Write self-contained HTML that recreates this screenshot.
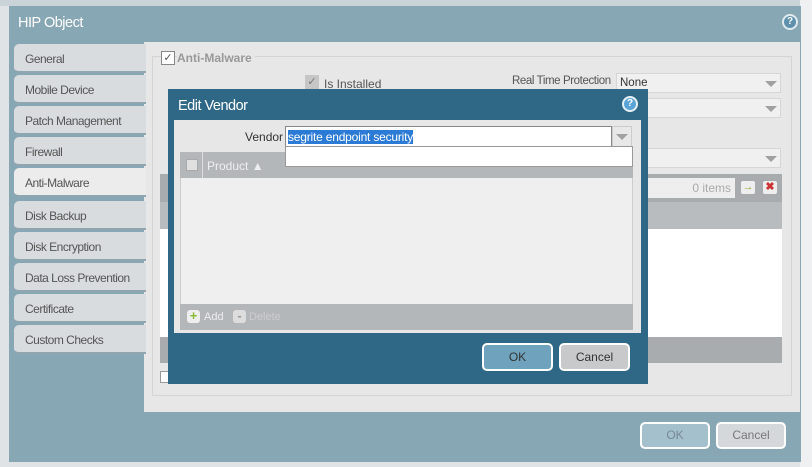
<!DOCTYPE html>
<html><head><style>
*{box-sizing:border-box;margin:0;padding:0}
body{width:812px;height:467px;position:relative;background:#dfe3e5;font-family:"Liberation Sans",sans-serif;overflow:hidden;font-size:12px;color:#333}
.a{position:absolute}
.tab{position:absolute;left:14px;width:132px;height:29px;background:#d8dcde;border-radius:5px 0 0 5px;border-bottom:2px solid #8fa6b1;padding:8px 0 0 11px;font-size:12px;color:#555;letter-spacing:-0.5px}
.dd{position:absolute;background:#f0f0f0;border:1px solid #d6d6d6}
.arr{position:absolute;width:0;height:0;border-left:6px solid transparent;border-right:6px solid transparent;border-top:6px solid #a0a0a0}
.btn{position:absolute;border:2px solid #fff;border-radius:5px;text-align:center;font-size:12px;color:#333}
</style></head><body>
<div class="a" style="left:0;top:0;width:812px;height:6px;background:#c9d3d8"></div>
<div class="a" style="left:800px;top:0;width:12px;height:467px;background:#eef0f1"></div>
<div class="a" style="left:9px;top:6px;width:792px;height:456px;background:#88a7b4"></div>
<div class="a" style="left:18px;top:15px;font-size:14.5px;color:#fff;letter-spacing:-0.5px">HIP Object</div>
<div class="a" style="left:782px;top:14px;width:16px;height:16px;border-radius:50%;background:#5f91ad;border:2px solid #dfeaf0;color:#fff;font-size:10px;font-weight:bold;text-align:center;line-height:12px">?</div>
<div class="a" style="left:144px;top:42px;width:656px;height:370px;background:#e7e7e7"></div>
<div class="a" style="left:152px;top:56px;width:640px;height:340px;border:1px solid #d4d4d4"></div>
<div class="a" style="left:161px;top:51px;width:14px;height:14px;border:1px solid #888;background:#fff;font-size:11px;line-height:12px;text-align:center;color:#555">✓</div>
<div class="a" style="left:177px;top:51px;font-weight:bold;color:#999;font-size:12px;background:#e7e7e7;padding-right:3px">Anti-Malware</div>
<div class="a" style="left:305px;top:75px;width:14px;height:14px;background:#c6c6c6;font-size:11px;line-height:14px;text-align:center;color:#777">✓</div>
<div class="a" style="left:324px;top:77px;font-size:12px;color:#555">Is Installed</div>
<div class="a" style="left:512px;top:75px;font-size:11.5px;color:#555;letter-spacing:-0.4px">Real Time Protection</div>
<div class="dd" style="left:616px;top:73px;width:165px;height:20px"><span style="position:absolute;left:3px;top:3px;font-size:11.5px">None</span><div class="arr" style="left:148px;top:7px"></div></div>
<div class="dd" style="left:616px;top:98px;width:165px;height:20px"><div class="arr" style="left:148px;top:7px"></div></div>
<div class="dd" style="left:616px;top:148px;width:165px;height:20px"><div class="arr" style="left:148px;top:7px"></div></div>
<div class="a" style="left:160px;top:174px;width:622px;height:28px;background:#a9acaf"></div>
<div class="a" style="left:640px;top:178px;width:95px;height:20px;background:#eee"><span style="position:absolute;right:4px;top:3px;color:#aaa">0 items</span></div>
<div class="a" style="left:741px;top:181px;width:14px;height:13px;background:#eee;border-radius:2px;color:#9a3;font-size:11px;line-height:13px;text-align:center">→</div>
<div class="a" style="left:763px;top:181px;width:14px;height:13px;background:#eee;border-radius:2px;color:#c33;font-size:11px;font-weight:bold;line-height:13px;text-align:center">✖</div>
<div class="a" style="left:160px;top:202px;width:622px;height:27px;background:#b8bcbf"></div>
<div class="a" style="left:160px;top:229px;width:622px;height:108px;background:#fff"></div>
<div class="a" style="left:160px;top:337px;width:622px;height:26px;background:#a9acaf"></div>
<div class="a" style="left:160px;top:371px;width:12px;height:12px;border:1px solid #999;background:#fff"></div>
<div class="tab" style="top:44px">General</div>
<div class="tab" style="top:75px">Mobile Device</div>
<div class="tab" style="top:106px">Patch Management</div>
<div class="tab" style="top:137px">Firewall</div>
<div class="tab" style="top:168px;background:#ececec">Anti-Malware</div>
<div class="tab" style="top:201px">Disk Backup</div>
<div class="tab" style="top:232px">Disk Encryption</div>
<div class="tab" style="top:263px">Data Loss Prevention</div>
<div class="tab" style="top:294px">Certificate</div>
<div class="tab" style="top:325px">Custom Checks</div>
<div class="btn" style="left:640px;top:422px;width:70px;height:27px;background:#a4c0cd;color:#789;line-height:23px">OK</div>
<div class="btn" style="left:716px;top:422px;width:70px;height:27px;background:#d5d8da;color:#777;line-height:23px">Cancel</div>
<div class="a" style="left:168px;top:89px;width:480px;height:295px;background:#2f6887"></div>
<div class="a" style="left:178px;top:98px;font-size:14.5px;color:#fff;letter-spacing:-0.5px">Edit Vendor</div>
<div class="a" style="left:622px;top:96px;width:16px;height:16px;border-radius:50%;background:#5aa3d6;border:2px solid #e6f0f6;color:#fff;font-size:10px;font-weight:bold;text-align:center;line-height:12px">?</div>
<div class="a" style="left:174px;top:120px;width:467px;height:213px;background:#e7e7e7"></div>
<div class="a" style="left:245px;top:130px;font-size:12px">Vendor</div>
<div class="a" style="left:285px;top:126px;width:327px;height:21px;background:#fff;border:1px solid #888"><span style="position:absolute;left:2px;top:3px;background:#2b7ad6;color:#fff;font-size:12px;line-height:14px;letter-spacing:-0.2px">segrite endpoint security</span></div>
<div class="a" style="left:612px;top:126px;width:20px;height:21px;background:#e8e8e8;border:1px solid #ccc"><div class="arr" style="left:3px;top:7px"></div></div>
<div class="a" style="left:180px;top:152px;width:453px;height:26px;background:#b4b7ba"></div>
<div class="a" style="left:186px;top:159px;width:12px;height:12px;background:#e0e0e0;border:1px solid #aaa"></div>
<div class="a" style="left:202px;top:152px;width:1px;height:26px;background:#ddd"></div>
<div class="a" style="left:207px;top:159px;color:#eee;font-size:12px">Product ▲</div>
<div class="a" style="left:285px;top:146px;width:348px;height:21px;background:#fff;border:1px solid #999"></div>
<div class="a" style="left:180px;top:178px;width:453px;height:126px;background:#efefef;border-left:1px solid #ccc;border-right:1px solid #ccc"></div>
<div class="a" style="left:180px;top:304px;width:453px;height:26px;background:#b4b7ba"></div>
<div class="a" style="left:187px;top:310px;width:13px;height:13px;background:#eee;border-radius:3px;color:#8b3;font-weight:bold;font-size:13px;line-height:12px;text-align:center">+</div>
<div class="a" style="left:204px;top:311px;color:#eee;font-size:11px">Add</div>
<div class="a" style="left:233px;top:310px;width:13px;height:13px;background:#ddd;border-radius:3px;color:#999;font-weight:bold;font-size:13px;line-height:11px;text-align:center">-</div>
<div class="a" style="left:249px;top:311px;color:#ccc;font-size:11px">Delete</div>
<div class="btn" style="left:482px;top:343px;width:71px;height:28px;background:#6ea2bd;line-height:24px">OK</div>
<div class="btn" style="left:559px;top:343px;width:71px;height:28px;background:#c7c9cb;line-height:24px">Cancel</div>
</body></html>
